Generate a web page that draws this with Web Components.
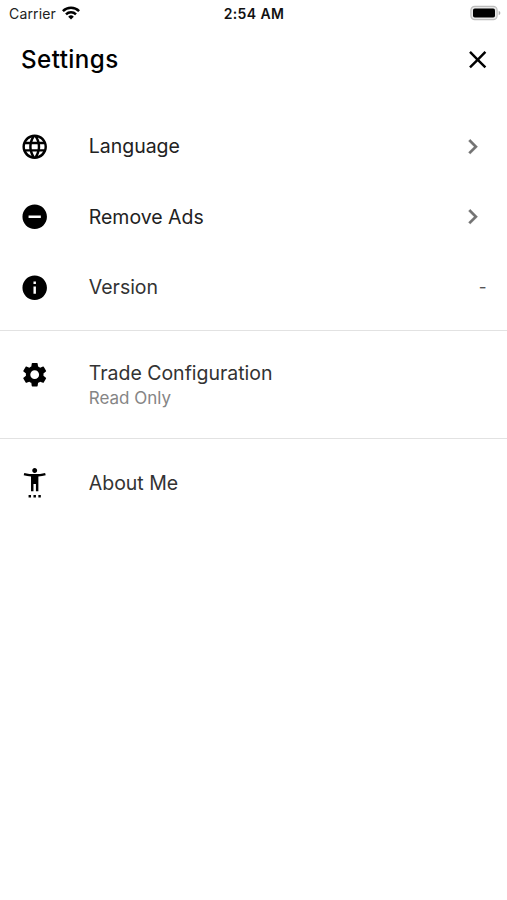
<!DOCTYPE html>
<html lang="en">
<head>
<meta charset="utf-8">
<title>Settings</title>
<style>
html,body{margin:0;background:#fff}
body{font-family:Inter,"Liberation Sans",sans-serif;color:#000}
</style>
</head>
<body>
<settings-screen></settings-screen>
<script>
const icons = {
  globe: '<path d="M11.99 2C6.47 2 2 6.48 2 12s4.47 10 9.99 10C17.52 22 22 17.52 22 12S17.52 2 11.99 2zm6.93 6h-2.95a15.65 15.65 0 0 0-1.38-3.56A8.03 8.03 0 0 1 18.92 8zM12 4.04c.83 1.2 1.48 2.53 1.91 3.96h-3.82c.43-1.43 1.08-2.76 1.91-3.96zM4.26 14C4.1 13.36 4 12.69 4 12s.1-1.36.26-2h3.38c-.08.66-.14 1.32-.14 2s.06 1.34.14 2H4.26zm.82 2h2.95c.32 1.25.78 2.45 1.38 3.56A7.987 7.987 0 0 1 5.08 16zm2.95-8H5.08a7.987 7.987 0 0 1 4.33-3.56A15.65 15.65 0 0 0 8.03 8zM12 19.96c-.83-1.2-1.48-2.53-1.91-3.96h3.82c-.43 1.43-1.08 2.76-1.91 3.96zM14.34 14H9.66c-.09-.66-.16-1.32-.16-2s.07-1.35.16-2h4.68c.09.65.16 1.32.16 2s-.07 1.34-.16 2zm.25 5.56c.6-1.11 1.06-2.31 1.38-3.56h2.95a8.03 8.03 0 0 1-4.33 3.56zM16.36 14c.08-.66.14-1.32.14-2s-.06-1.34-.14-2h3.38c.16.64.26 1.31.26 2s-.1 1.36-.26 2h-3.38z"/>',
  minus: '<path d="M12 2C6.48 2 2 6.48 2 12s4.48 10 10 10 10-4.48 10-10S17.52 2 12 2zm5 11H7v-2h10v2z"/>',
  info: '<path d="M12 2C6.48 2 2 6.48 2 12s4.48 10 10 10 10-4.48 10-10S17.52 2 12 2zm1 15h-2v-6h2v6zm0-8h-2V7h2v2z"/>',
  gear: '<path d="M19.14 12.94c.04-.3.06-.61.06-.94 0-.32-.02-.64-.07-.94l2.03-1.58a.49.49 0 0 0 .12-.61l-1.92-3.32a.488.488 0 0 0-.59-.22l-2.39.96c-.5-.38-1.03-.7-1.62-.94l-.36-2.54a.484.484 0 0 0-.48-.41h-3.84c-.24 0-.43.17-.47.41l-.36 2.54c-.59.24-1.13.57-1.62.94l-2.39-.96c-.22-.08-.47 0-.59.22L2.74 8.87c-.12.21-.08.47.12.61l2.03 1.58c-.05.3-.09.63-.09.94s.02.64.07.94l-2.03 1.58a.49.49 0 0 0-.12.61l1.92 3.32c.12.22.37.29.59.22l2.39-.96c.5.38 1.03.7 1.62.94l.36 2.54c.05.24.24.41.48.41h3.84c.24 0 .44-.17.47-.41l.36-2.54c.59-.24 1.13-.56 1.62-.94l2.39.96c.22.08.47 0 .59-.22l1.92-3.32c.12-.22.07-.47-.12-.61l-2.01-1.58zM12 15.6c-1.98 0-3.6-1.62-3.6-3.6s1.62-3.6 3.6-3.6 3.6 1.62 3.6 3.6-1.62 3.6-3.6 3.6z"/>',
  person: '<path d="M20.5 4c-2.61.7-5.67 1-8.5 1s-5.89-.3-8.5-1L3 6c1.86.5 4 .83 6 1v12h2v-6h2v6h2V7c2-.17 4.14-.5 6-1l-.5-2zM12 4c1.1 0 2-.9 2-2s-.9-2-2-2-2 .9-2 2 .9 2 2 2zM7 24h2v-2H7v2zm4 0h2v-2h-2v2zm4 0h2v-2h-2v2z"/>',
  close: '<path d="M19 6.41 17.59 5 12 10.59 6.41 5 5 6.41 10.59 12 5 17.59 6.41 19 12 13.41 17.59 19 19 17.59 13.41 12z"/>',
  chevron: '<path stroke="currentColor" stroke-width=".3" d="M10 6 8.59 7.41 13.17 12l-4.58 4.59L10 18l6-6z"/>'
};
const define = (name, html) => customElements.define(name, class extends HTMLElement {
  connectedCallback() {
    if (this.shadowRoot) return;
    this.attachShadow({mode: 'open'}).innerHTML = typeof html === 'function' ? html(this) : html;
  }
});

define('app-icon', el => `<style>
:host{display:block;flex:none;width:29.4px;height:29.4px}
svg{display:block;width:100%;height:100%;fill:currentColor;overflow:visible}
</style><svg viewBox="0 0 24 24">${icons[el.getAttribute('name')]}</svg>`);

define('status-bar', `<style>
:host{display:grid;grid-template-columns:1fr auto 1fr;align-items:center;height:27px;padding:0 6px 0 9px;box-sizing:border-box;font-size:14px;line-height:27px}
.left{display:flex;align-items:center;gap:6px;color:#222}
.carrier{letter-spacing:.15px}
.time{font-weight:600;font-size:14px;letter-spacing:.4px;color:#111;margin-right:2px}
.wifi{display:block;width:18px;height:14px;margin-bottom:1px}
.battery{display:block;justify-self:end;width:31px;height:16px;margin-bottom:1px}
</style>
<span class="left"><span class="carrier">Carrier</span>
<svg class="wifi" viewBox="0 0 18 14"><g fill="none" stroke="#000" stroke-width="2.5"><path d="M.9 5.1a11.5 11.5 0 0 1 16.2 0"/><path d="M4 8.3a7.1 7.1 0 0 1 10 0"/></g><path d="M9 13.6 6.2 10.7a4 4 0 0 1 5.6 0z"/></svg></span>
<span class="time">2:54 AM</span>
<svg class="battery" viewBox="0 0 31 16"><rect x=".9" y="1.4" width="26.2" height="13.2" rx="3.8" fill="#e8e8e8" stroke="#bdbdbd" stroke-width="1.2"/><rect x="3" y="3.5" width="22" height="9" rx="1.8" fill="#000"/><path d="M28.7 5.8q1.7.7 1.7 2.2t-1.7 2.2z" fill="#aaa"/></svg>`);

define('page-header', `<style>
:host{display:flex;align-items:center;justify-content:space-between;height:66px;padding:0 15px 0 21px}
h1{margin:0;font-size:24.2px;font-weight:500;line-height:30px;letter-spacing:.42px}
</style><h1><slot></slot></h1><app-icon name="close"></app-icon>`);

define('list-row', el => `<style>
:host{display:flex;align-items:center;height:70.4px;padding:0 20.5px 0 20px;box-sizing:border-box;color:#222}
.icon{color:#000;margin-right:39.4px}
.text{flex:1;display:flex;flex-direction:column}
.title{font-size:19.5px;line-height:26px;letter-spacing:-.02px}
:host([two-line]) .text{padding-top:10px}
:host([two-line]) .icon{margin-bottom:10px}
::slotted([slot=subtitle]){font-size:17px;line-height:24px;color:#858585}
::slotted([slot=end]){color:#555;font-size:17px}
app-icon[name=chevron]{color:#737373;margin-right:-1px}
</style><app-icon class="icon" name="${el.getAttribute('icon')}"></app-icon>
<span class="text"><span class="title"><slot></slot></span><slot name="subtitle"></slot></span>
${el.hasAttribute('chevron') ? '<app-icon name="chevron"></app-icon>' : '<slot name="end"></slot>'}`);

define('list-group', `<style>
:host{display:block}
:host([divided]){border-bottom:1.3px solid #e2e2e2}
</style><slot></slot>`);

define('settings-screen', `<style>
:host{display:block;width:507px;height:900px;overflow:hidden;background:#fff}
.first{padding:18.3px 0 7.5px}
.second{padding:9px 0 18px}
.second list-row{height:80px}
.third{padding-top:8.6px}
.muted{color:#333}
</style>
<status-bar></status-bar>
<page-header>Settings</page-header>
<list-group class="first" divided>
<list-row icon="globe" chevron>Language</list-row>
<list-row icon="minus" chevron>Remove Ads</list-row>
<list-row class="muted" icon="info">Version<span slot="end">-</span></list-row>
</list-group>
<list-group class="second" divided>
<list-row class="muted" icon="gear" two-line>Trade Configuration<span slot="subtitle">Read Only</span></list-row>
</list-group>
<list-group class="third">
<list-row class="muted" icon="person">About Me</list-row>
</list-group>`);
</script>
</body>
</html>
